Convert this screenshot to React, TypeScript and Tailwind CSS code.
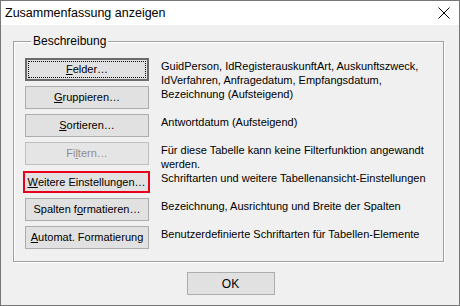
import React from 'react';

type Row = {
  label: React.ReactNode;
  text: React.ReactNode;
  kind?: 'default' | 'disabled' | 'marked';
};

const rows: Row[] = [
  {
    label: <><u>F</u>elder…</>,
    text: <>GuidPerson, IdRegisterauskunftArt, Auskunftszweck,<br />IdVerfahren, Anfragedatum, Empfangsdatum,</>,
    kind: 'default',
  },
  { label: <><u>G</u>ruppieren…</>, text: 'Bezeichnung (Aufsteigend)' },
  { label: <><u>S</u>ortieren…</>, text: 'Antwortdatum (Aufsteigend)' },
  {
    label: <>Fi<u>l</u>tern…</>,
    text: <>Für diese Tabelle kann keine Filterfunktion angewandt<br />werden.</>,
    kind: 'disabled',
  },
  {
    label: <><u>W</u>eitere Einstellungen…</>,
    text: 'Schriftarten und weitere Tabellenansicht-Einstellungen',
    kind: 'marked',
  },
  { label: <>Spalten f<u>o</u>rmatieren…</>, text: 'Bezeichnung, Ausrichtung und Breite der Spalten' },
  { label: <><u>A</u>utomat. Formatierung</>, text: 'Benutzerdefinierte Schriftarten für Tabellen-Elemente' },
];

function DialogButton({ label, kind }: { label: React.ReactNode; kind?: Row['kind'] }) {
  if (kind === 'default') {
    return (
      <button className="flex h-[23px] w-[124px] whitespace-nowrap border-2 border-[#6b6b6b] bg-[#e1e1e1] p-[1px] text-black">
        <span className="flex flex-1 items-center justify-center border border-dotted border-black">{label}</span>
      </button>
    );
  }
  if (kind === 'marked') {
    return (
      <button className="-ml-[2px] mt-[1px] flex h-[22px] w-[127px] items-center justify-center whitespace-nowrap border-2 border-[#e8001c] bg-[#e1e1e1] text-black">
        {label}
      </button>
    );
  }
  return (
    <button
      className={
        kind === 'disabled'
          ? 'flex h-[23px] w-[124px] items-center justify-center whitespace-nowrap border border-[#bfbfbf] bg-[#e5e5e5] text-[#8d8d8d]'
          : 'flex h-[23px] w-[124px] items-center justify-center whitespace-nowrap border border-[#adadad] bg-[#e1e1e1] text-black'
      }
    >
      {label}
    </button>
  );
}

export default function App() {
  return (
    <div
      className="flex h-[306px] w-[460px] flex-col border border-[#777777] bg-[#f0f0f0] text-[11px] text-black"
      style={{ fontFamily: '"Liberation Sans", Arial, sans-serif' }}
    >
      {/* Title bar */}
      <div className="flex h-[24px] shrink-0 items-center justify-between bg-white pl-[4px] pr-[9px]">
        <span className="text-[12.5px]">Zusammenfassung anzeigen</span>
        <svg width="12" height="12" viewBox="0 0 12 12" className="mb-[1px]">
          <path d="M0.5 0.5 L11.5 11.5 M11.5 0.5 L0.5 11.5" stroke="#000" strokeWidth="1" />
        </svg>
      </div>

      {/* Group box */}
      <fieldset className="ml-[12px] mt-[9px] w-[431px] shrink-0 border border-[#a0a0a0] pb-[7px] pl-[11px] pt-[10px] shadow-[inset_1px_1px_0_#ffffff,1px_1px_0_#ffffff]">
        <legend className="ml-[6px] bg-[#f0f0f0] px-[2px] text-[12px] leading-[14px]">Beschreibung</legend>
        <div className="flex flex-col">
          {rows.map((row, i) => (
            <div key={i} className="flex h-[28px] items-start gap-[12px]">
              <div className="w-[124px] shrink-0">
                <DialogButton label={row.label} kind={row.kind} />
              </div>
              <p className="pt-[1px] text-[11px] leading-[14px]">{row.text}</p>
            </div>
          ))}
        </div>
      </fieldset>

      {/* Footer */}
      <div className="mt-[10px] flex justify-center">
        <button className="ml-[1px] h-[23px] w-[88px] border border-[#adadad] bg-[#e1e1e1] text-[12px]">OK</button>
      </div>
    </div>
  );
}
